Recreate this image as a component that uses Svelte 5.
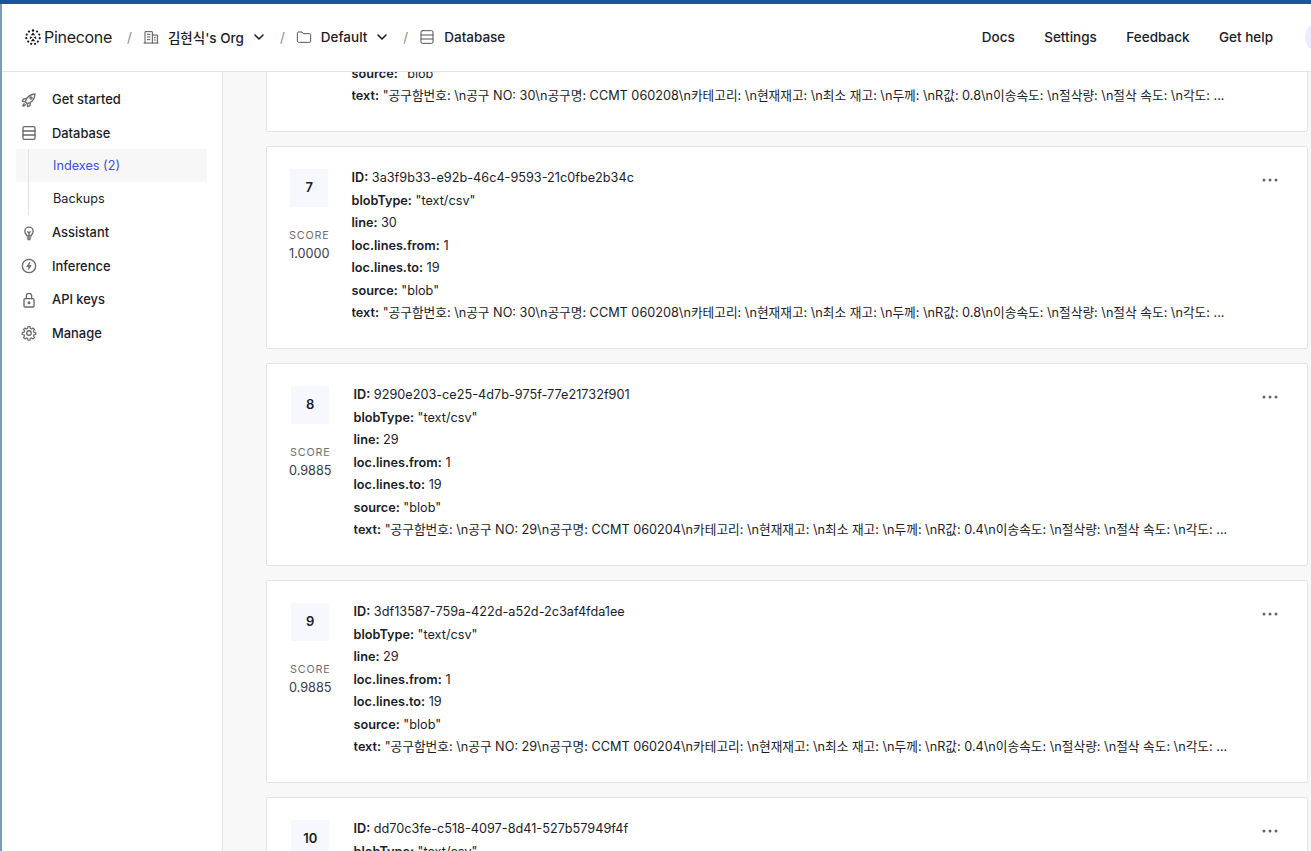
<script lang="ts">
  const crumbs = [
    { key: "org", label: "김현식's Org", chevron: true },
    { key: "folder", label: "Default", chevron: true },
    { key: "db", label: "Database", chevron: false },
  ];
  const links = ["Docs", "Settings", "Feedback", "Get help"];

  const text = (n: number, r: string, no: string) =>
    `"공구함번호: \\n공구 NO: ${n}\\n공구명: CCMT ${no}\\n카테고리: \\n현재재고: \\n최소 재고: \\n두께: \\nR값: ${r}\\n이송속도: \\n절삭량: \\n절삭 속도: \\n각도: ...`;

  const records = [
    { rank: 6, score: "1.0000", id: "", line: 30, text: text(30, "0.8", "060208") },
    { rank: 7, score: "1.0000", id: "3a3f9b33-e92b-46c4-9593-21c0fbe2b34c", line: 30, text: text(30, "0.8", "060208") },
    { rank: 8, score: "0.9885", id: "9290e203-ce25-4d7b-975f-77e21732f901", line: 29, text: text(29, "0.4", "060204") },
    { rank: 9, score: "0.9885", id: "3df13587-759a-422d-a52d-2c3af4fda1ee", line: 29, text: text(29, "0.4", "060204") },
    { rank: 10, score: "0.9885", id: "dd70c3fe-c518-4097-8d41-527b57949f4f", line: 29, text: text(29, "0.4", "060204") },
  ];
</script>

{#snippet icon(name: string)}
  <svg class="icon" viewBox="0 0 24 24" fill="none" stroke="currentColor" stroke-width="2" stroke-linecap="round" stroke-linejoin="round">
    {#if name === "rocket"}
      <path d="M9.500 17.500 6.500 14.500C8 9 12.500 4 21 3 20.500 11.500 15 16 9.500 17.500Z" />
      <path d="M7.500 10 3.500 10.500 2 14l4.500.5M14 16.500 13.500 20.500 10 22l-.5-4.500" />
      <circle cx="15" cy="9" r="1.600" />
      <path d="M5 17.500c-1.300.5-2 1.800-2.200 3.700 1.900-.2 3.200-.9 3.700-2.200" />
    {:else if name === "db"}
      <rect x="3" y="2.500" width="18" height="19" rx="2" />
      <path d="M3 9h18M3 15h18" />
    {:else if name === "org"}
      <path d="M3 21V4h11v17M14 9h7.500v12M1.500 21h21" />
      <path d="M6.500 8h4M6.500 12h4M6.500 16h4M17 13h1.500M17 16.500h1.500" />
    {:else if name === "folder"}
      <path d="M2 6a1.500 1.500 0 0 1 1.500-1.500h5.500l2 2.500h9.500a1.500 1.500 0 0 1 1.500 1.500v10a1.500 1.500 0 0 1-1.500 1.500H3.500a1.500 1.500 0 0 1-1.500-1.500Z" />
    {:else if name === "bulb"}
      <path d="M9 16.500c0-2-3.200-3-3.200-7.200a6.200 6.200 0 0 1 12.400 0c0 4.200-3.200 5.200-3.200 7.200Z" />
      <path d="M9.500 19.500h5M10.500 22h3M12 16V12l-2-2M12 12l2-2" />
    {:else if name === "bolt"}
      <circle cx="12" cy="12" r="10" />
      <path d="M13 6.500 8.500 13H12l-1 4.500 4.500-6.500H12Z" fill="currentColor" stroke-width="1" />
    {:else if name === "lock"}
      <rect x="4.500" y="10" width="15" height="12.500" rx="1.500" />
      <path d="M8 10V6a4 4 0 0 1 8 0v4" />
      <circle cx="12" cy="16.200" r="1.300" fill="currentColor" />
    {:else if name === "gear"}
      <path d="M10.300 1.500h3.400l.5 3 2 .9 2.500-1.700 2.400 2.400-1.700 2.500.9 2 3 .5v3.400l-3 .5-.9 2 1.700 2.500-2.400 2.400-2.500-1.700-2 .9-.5 3h-3.400l-.5-3-2-.9-2.500 1.700-2.400-2.400 1.700-2.500-.9-2-3-.5v-3.400l3-.5.9-2-1.700-2.500 2.400-2.400 2.500 1.700 2-.9Z" transform="translate(1.200 1.200) scale(.9)" />
      <circle cx="12" cy="12" r="3.400" />
    {/if}
  </svg>
{/snippet}

<div class="page">
  <div class="frame">
    <header>
      <div class="brand">
        <svg class="logo" viewBox="0 0 20 20" fill="#14141e">
          <circle cx="10" cy="1.800" r="1.500" /><circle cx="5" cy="3.200" r="1.400" /><circle cx="15" cy="3.200" r="1.400" />
          <circle cx="2.200" cy="7" r="1.400" /><circle cx="17.800" cy="7" r="1.400" /><circle cx="1.600" cy="11.500" r="1.400" />
          <circle cx="18.400" cy="11.500" r="1.400" /><circle cx="4" cy="15.700" r="1.400" /><circle cx="16" cy="15.700" r="1.400" />
          <circle cx="7.800" cy="18.500" r="1.400" /><circle cx="12.500" cy="18.500" r="1.400" />
          <path d="M10 4.500 12.800 7.800H7.200ZM6.200 9 9.300 10.500 6 12.800ZM13.800 9 14 12.800 10.700 10.500ZM10 11.800 12.800 15.200H7.200Z" />
        </svg>
        <span class="word">Pinecone</span>
      </div>
      {#each crumbs as c}
        <span class="sep">/</span>
        <div class="crumb">
          {@render icon(c.key)}
          <span>{c.label}</span>
          {#if c.chevron}
            <svg class="chev" viewBox="0 0 12 12" fill="none" stroke="currentColor" stroke-width="1.600" stroke-linecap="round" stroke-linejoin="round"><path d="M2 4l4 4 4-4" /></svg>
          {/if}
        </div>
      {/each}
      <nav class="links">
        {#each links as l}<a href="#top">{l}</a>{/each}
      </nav>
      <div class="avatar"></div>
    </header>

    <div class="body">
      <aside>
        <a class="item" href="#top">{@render icon("rocket")}<span>Get started</span></a>
        <a class="item" href="#top">{@render icon("db")}<span>Database</span></a>
        <div class="subs">
          <a class="sub active" href="#top">Indexes (2)</a>
          <a class="sub" href="#top">Backups</a>
        </div>
        <a class="item" href="#top">{@render icon("bulb")}<span>Assistant</span></a>
        <a class="item" href="#top">{@render icon("bolt")}<span>Inference</span></a>
        <a class="item" href="#top">{@render icon("lock")}<span>API keys</span></a>
        <a class="item" href="#top">{@render icon("gear")}<span>Manage</span></a>
      </aside>

      <main>
        <div class="list">
          {#each records as r}
            <article class="card">
              <div class="left">
                <div class="rank">{r.rank}</div>
                <div class="label">SCORE</div>
                <div class="score">{r.score}</div>
              </div>
              <div class="fields">
                <div><b>ID:</b> {r.id}</div>
                <div><b>blobType:</b> "text/csv"</div>
                <div><b>line:</b> {r.line}</div>
                <div><b>loc.lines.from:</b> 1</div>
                <div><b>loc.lines.to:</b> 19</div>
                <div><b>source:</b> "blob"</div>
                <div><b>text:</b> {r.text}</div>
              </div>
              <svg class="more" viewBox="0 0 16 4" fill="currentColor"><circle cx="2" cy="2" r="1.500" /><circle cx="8" cy="2" r="1.500" /><circle cx="14" cy="2" r="1.500" /></svg>
            </article>
          {/each}
        </div>
      </main>
    </div>
  </div>
</div>

<style>
  :global(body) {
    margin: 0;
    overflow: hidden;
    font-family: Inter, "Noto Sans CJK KR", sans-serif;
    color: #1c1c28;
  }
  a {
    color: inherit;
    text-decoration: none;
  }
  .page {
    height: 851px;
    border-top: 4px solid #17569c;
    box-sizing: border-box;
    overflow: hidden;
  }
  .frame {
    height: 100%;
    border-left: 2px solid #7d9bb5;
    display: flex;
    flex-direction: column;
    background: #fff;
  }
  header {
    flex: 0 0 68px;
    box-sizing: border-box;
    display: flex;
    align-items: center;
    padding: 0 0 1px 23px;
    border-bottom: 1px solid #e4e4e4;
    overflow: hidden;
    font-size: 13.500px;
    font-weight: 500;
  }
  .brand {
    display: flex;
    align-items: center;
    gap: 3px;
  }
  .logo {
    width: 16px;
    height: 16px;
  }
  .word {
    font-size: 16px;
    font-weight: 400;
    letter-spacing: -0.3px;
  }
  .sep {
    margin: 0 11px 0 15px;
    color: #8a8a8a;
    font-weight: 400;
  }
  .crumb {
    display: flex;
    align-items: center;
    gap: 9px;
    white-space: nowrap;
  }
  .crumb .icon {
    width: 16px;
    height: 16px;
    color: #555;
    stroke-width: 1.500;
  }
  .chev {
    width: 12px;
    height: 12px;
  }
  .links {
    margin-left: auto;
    display: flex;
    gap: 29.500px;
  }
  .avatar {
    flex: 0 0 32px;
    height: 32px;
    margin-left: 32px;
    margin-right: -26px;
    border-radius: 50%;
    background: #eceefc;
  }
  .body {
    flex: 1;
    min-height: 0;
    display: flex;
  }
  aside {
    flex: 0 0 221px;
    box-sizing: border-box;
    border-right: 1px solid #e4e4e4;
    padding-top: 11px;
    font-size: 12.900px;
    font-weight: 500;
  }
  .item {
    display: flex;
    align-items: center;
    gap: 15px;
    height: 33.400px;
    padding-left: 19px;
  }
  .item .icon {
    width: 16px;
    height: 16px;
    color: #6a6a6a;
  }
  .subs {
    margin: -1px 0 1.500px 14px;
    width: 191px;
    position: relative;
  }
  .subs::before {
    content: "";
    position: absolute;
    left: 12px;
    top: 0;
    bottom: 0;
    width: 1px;
    background: #e4e4e4;
  }
  .sub {
    display: flex;
    align-items: center;
    height: 33px;
    padding-left: 37px;
    font-size: 12.700px;
    font-weight: 400;
  }
  .sub.active {
    background: #f7f7f7;
    color: #3d4fe0;
  }
  main {
    flex: 1;
    min-width: 0;
    background: #f8f8f8;
    overflow: hidden;
  }
  .list {
    display: flex;
    flex-direction: column;
    gap: 14px;
    margin: -143px 3px 0 43px;
  }
  .card {
    height: 203px;
    flex-shrink: 0;
    box-sizing: border-box;
    display: flex;
    padding: 20px 29px 0 22px;
    background: #fff;
    border: 1px solid #e4e4e4;
    border-radius: 2px;
    font-size: 12.700px;
  }
  .left {
    margin-top: 2px;
    margin-right: 22px;
    display: flex;
    flex-direction: column;
    align-items: center;
  }
  .rank {
    width: 38px;
    height: 38px;
    display: flex;
    align-items: center;
    justify-content: center;
    padding-bottom: 2px;
    box-sizing: border-box;
    background: #f7f8fd;
    font-weight: 600;
    font-size: 13px;
  }
  .label {
    margin-top: 22px;
    font-size: 10.800px;
    letter-spacing: 0.8px;
    color: #6f6f6f;
  }
  .score {
    margin-top: 4px;
    font-size: 12.700px;
    color: #3a3a46;
  }
  .fields {
    flex: 1;
    min-width: 0;
    line-height: 22.500px;
    white-space: nowrap;
    overflow: hidden;
  }
  .fields b {
    font-weight: 600;
  }
  .more {
    width: 16px;
    height: 4px;
    margin-top: 11px;
    color: #666;
  }
</style>
